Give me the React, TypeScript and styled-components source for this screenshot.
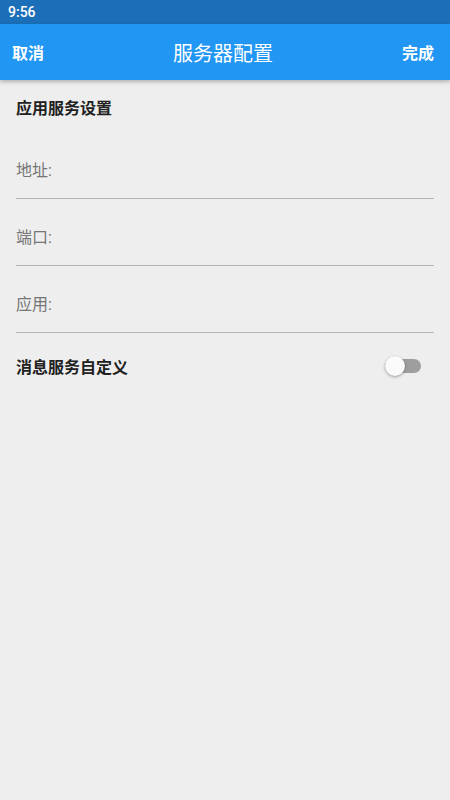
import React from 'react';
import styled, { createGlobalStyle } from 'styled-components';

const GlobalStyle = createGlobalStyle`
	html, body {
		margin: 0;
		padding: 0;
		background: #eeeeee;
	}
	body {
		font-family: Roboto, "Noto Sans CJK SC", sans-serif;
	}
`;

const Screen = styled.div`
	width: 450px;
	height: 800px;
	background: #eeeeee;
	display: flex;
	flex-direction: column;
	overflow: hidden;
`;

const StatusBar = styled.div`
	height: 24px;
	background: #1a6fb8;
	color: #fff;
	font-size: 14px;
	font-weight: 500;
	display: flex;
	align-items: center;
	padding-left: 8px;
`;

const AppBar = styled.header`
	height: 56px;
	background: #2196f3;
	color: #fff;
	display: flex;
	align-items: center;
	justify-content: space-between;
	padding: 0 16px 0 12px;
	box-shadow: 0 2px 4px rgba(0, 0, 0, 0.25);
	position: relative;
	z-index: 1;
`;

const BarAction = styled.span<{ $align?: string }>`
	font-size: 16px;
	font-weight: 700;
	width: 40px;
	text-align: ${(p) => p.$align || 'left'};
`;

const BarTitle = styled.h1`
	margin: 0;
	font-size: 20px;
	font-weight: 400;
`;

const Content = styled.main`
	padding: 0 16px;
	display: flex;
	flex-direction: column;
`;

const SectionTitle = styled.div`
	font-size: 16px;
	font-weight: 700;
	color: #212121;
	margin-top: 19px;
	height: 20px;
	line-height: 20px;
`;

const Field = styled.label`
	display: flex;
	align-items: flex-end;
	height: 67px;
	box-sizing: border-box;
	padding-bottom: 17px;
	line-height: 20px;
	border-bottom: 1px solid #b4b4b4;
	font-size: 16px;
	color: #757575;
	&:first-of-type {
		margin-top: 13px;
	}
`;

const Row = styled.div`
	display: flex;
	align-items: center;
	justify-content: space-between;
	height: 66px;
`;

const RowLabel = styled.span`
	font-size: 16px;
	font-weight: 700;
	color: #212121;
`;

const Switch = styled.div`
	position: relative;
	width: 36px;
	height: 14px;
	border-radius: 7px;
	background: #9e9e9e;
	margin-right: 13px;
`;

const Thumb = styled.div`
	position: absolute;
	left: 0;
	top: -3px;
	width: 20px;
	height: 20px;
	border-radius: 50%;
	background: #fafafa;
	box-shadow: 0 1px 3px rgba(0, 0, 0, 0.35);
`;

export default function App() {
	return (
		<Screen>
			<GlobalStyle />
			<StatusBar>9:56</StatusBar>
			<AppBar>
				<BarAction>取消</BarAction>
				<BarTitle>服务器配置</BarTitle>
				<BarAction $align="right">完成</BarAction>
			</AppBar>
			<Content>
				<SectionTitle>应用服务设置</SectionTitle>
				<Field>地址:</Field>
				<Field>端口:</Field>
				<Field>应用:</Field>
				<Row>
					<RowLabel>消息服务自定义</RowLabel>
					<Switch>
						<Thumb />
					</Switch>
				</Row>
			</Content>
		</Screen>
	);
}
